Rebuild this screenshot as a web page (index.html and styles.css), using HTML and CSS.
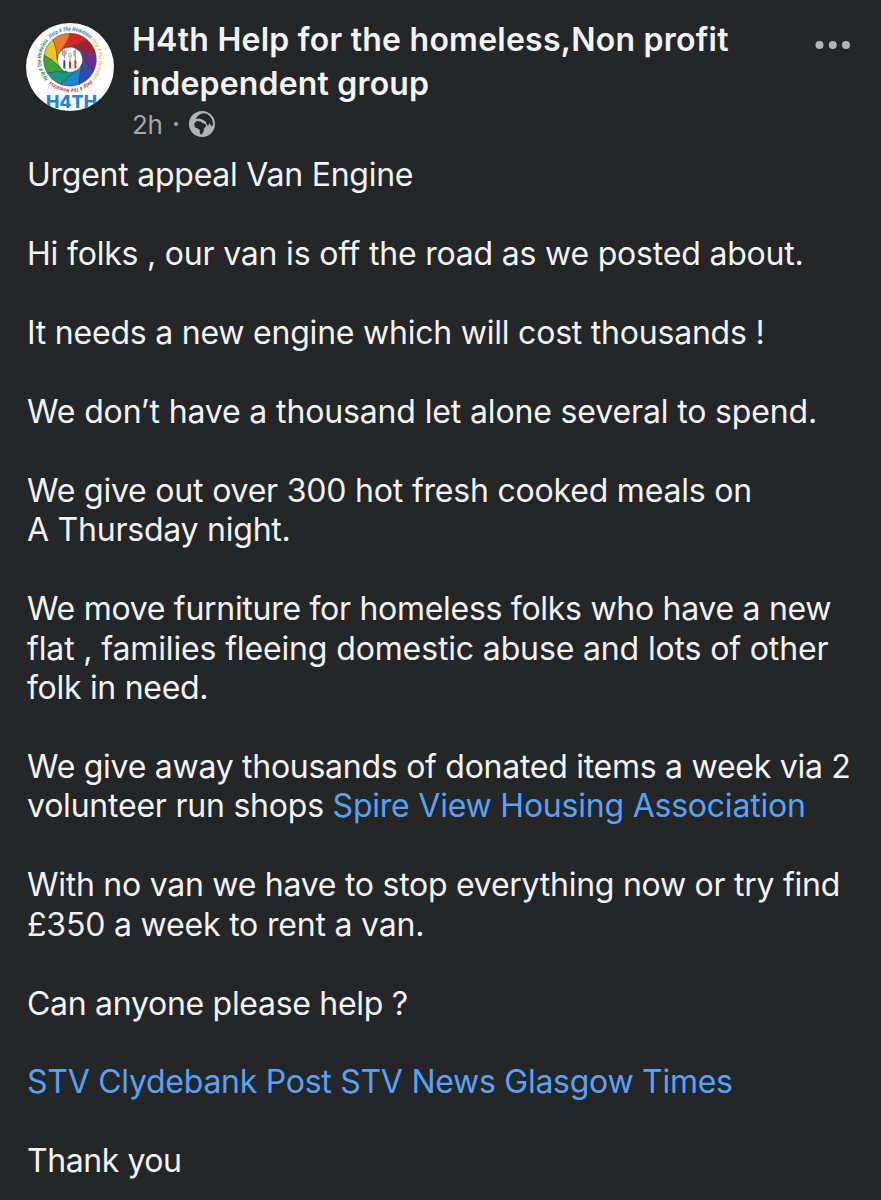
FILE: index.html
```html
<!DOCTYPE html>
<html lang="en">
<head>
<meta charset="utf-8">
<title>H4th Help for the homeless</title>
<link rel="stylesheet" href="styles.css">
</head>
<body>
<article class="post">
  <header class="head">
    <svg class="avatar" viewBox="18 20 264 264" aria-label="H4TH logo">
      <defs>
        <clipPath id="disc"><circle cx="150" cy="152" r="132"/></clipPath>
        <path id="blade" d="M0-79A79 79 0 0 1 50.8-60.5Q26-43.4-6.6-37.4A38 38 0 0 0-29.1-24.4Q-8-50 0-79Z"/>
        <path id="ring" d="M0 87A87 87 0 0 1 0-87A87 87 0 0 1 0 87A87 87 0 0 1 0-87"/>
      </defs>
      <circle cx="150" cy="152" r="132" fill="#fff"/>
      <g clip-path="url(#disc)">
        <g transform="translate(150 130)">
          <g stroke="#553c35" stroke-width="1.5">
            <use href="#blade" fill="#d3262c"/>
            <use href="#blade" fill="#9b2236" transform="rotate(40)"/>
            <use href="#blade" fill="#6b2c91" transform="rotate(80)"/>
            <use href="#blade" fill="#304bb0" transform="rotate(120)"/>
            <use href="#blade" fill="#1689d0" transform="rotate(160)"/>
            <use href="#blade" fill="#16978c" transform="rotate(200)"/>
            <use href="#blade" fill="#42a23a" transform="rotate(240)"/>
            <use href="#blade" fill="#edc51c" transform="rotate(280)"/>
            <use href="#blade" fill="#ef792b" transform="rotate(320)"/>
          </g>
          <g fill="none" stroke-width="4" stroke-linecap="round">
            <path stroke="#a8a8a8" d="M-17-28V-4M-22-27V-16Q-17-10-12-16V-27M16-29V0M12-27V-13"/>
            <path stroke="#b8b8b8" d="M0-6V8"/>
            <ellipse cx="0" cy="-13" rx="4" ry="6" stroke="#b8b8b8"/>
            <path stroke="#304b92" stroke-width="6" d="M-17 4V24"/>
            <path stroke="#c03a3a" stroke-width="6" d="M0 8V24M16 4V24"/>
          </g>
          <g class="motto">
            <text fill="#2a78ba" transform="rotate(-43)"><textPath href="#ring" startOffset="273.3" textLength="133" lengthAdjust="spacingAndGlyphs">Help 4 The Homeless</textPath></text>
            <text fill="#e4c34d" transform="rotate(47)"><textPath href="#ring" startOffset="273.3" textLength="128" lengthAdjust="spacingAndGlyphs">Help 4 The Homeless</textPath></text>
            <text fill="#c9343f" transform="rotate(134)"><textPath href="#ring" startOffset="273.3" textLength="133" lengthAdjust="spacingAndGlyphs">Help 4 The Homeless</textPath></text>
            <text fill="#24874c" transform="rotate(228)"><textPath href="#ring" startOffset="273.3" textLength="126" lengthAdjust="spacingAndGlyphs">Help 4 The Homeless</textPath></text>
          </g>
        </g>
        <text class="mark" x="78" y="275" textLength="153" lengthAdjust="spacingAndGlyphs">H4TH</text>
      </g>
    </svg>
    <div class="who">
      <h1 class="name"><span class="n1">H4th Help for the homeless,Non profit</span><br><span class="n2">independent group</span></h1>
      <div class="meta">
        <span>2h</span><i class="sep"></i>
        <svg class="globe" viewBox="0 0 26 26" aria-label="Public">
          <circle cx="13" cy="13" r="13" fill="#b0b3b8"/>
          <path fill="#252628" d="M6.5 8.2C8 5.3 10.5 2.7 14 2.2C19.5 2 24 7 24 13.5L22.8 15.8L20.5 12L19.3 14.7L17.6 13.7L17 10.8L13.2 8.6L9.8 7.5Z"/>
          <path fill="#252628" d="M5.3 12.4L7.8 10L11.8 10.4L13.2 12L16 12.7L17.3 15L15.2 17.2L14.6 20.6L12.6 23.6L11 23L10.5 18.6L8.7 17.4L5.8 16.3Z"/>
        </svg>
      </div>
    </div>
    <svg class="more" viewBox="0 0 36 8" aria-label="More"><circle cx="4.5" cy="4" r="4"/><circle cx="17.8" cy="4" r="4"/><circle cx="31" cy="4" r="4"/></svg>
  </header>
  <div class="body">
    <p><span class="l1">Urgent appeal Van Engine</span></p>
    <p><span class="l2">Hi folks , our van is off the road as we posted about.</span></p>
    <p><span class="l3">It needs a new engine which will cost thousands !</span></p>
    <p><span class="l4">We don’t have a thousand let alone several to spend.</span></p>
    <p><span class="l5">We give out over 300 hot fresh cooked meals on</span><br><span class="l6">A Thursday night.</span></p>
    <p><span class="l7">We move furniture for homeless folks who have a new</span><br><span class="l8">flat , families fleeing domestic abuse and lots of other</span><br><span class="l9">folk in need.</span></p>
    <p><span class="l10">We give away thousands of donated items a week via 2</span><br><span class="l11">volunteer run shops <a>Spire View Housing Association</a></span></p>
    <p><span class="l12">With no van we have to stop everything now or try find</span><br><span class="l13">£350 a week to rent a van.</span></p>
    <p><span class="l14">Can anyone please help ?</span></p>
    <p><span class="l15"><a>STV</a> <a>Clydebank Post</a> <a>STV News</a> <a>Glasgow Times</a></span></p>
    <p><span class="l16">Thank you</span></p>
  </div>
</article>
</body>
</html>
```
FILE: styles.css
```css
body {
  margin: 0;
  background: #252628;
  color: #f2f3f5;
  font-family: Inter, "Liberation Sans", sans-serif;
}
.post { height: 1200px; overflow: hidden; }
.head {
  display: flex;
  align-items: flex-start;
  height: 155.4px;
  box-sizing: border-box;
  padding: 18px 30px 0 26px;
}
.avatar { width: 88px; height: 88px; margin-top: 5px; flex: none; }
.motto { font: italic 700 16px "Open Sans", sans-serif; }
.mark { font: 800 51px Inter, sans-serif; fill: #2384d4; }
.who { flex: 1; margin-left: 18px; white-space: nowrap; }
.name { margin: 0; font-size: 32px; line-height: 43.5px; font-weight: 600; }
.meta {
  display: flex;
  align-items: center;
  height: 38px;
  font-size: 26px;
  letter-spacing: -0.4px;
  color: #a5a7ab;
}
.sep { width: 4px; height: 4px; border-radius: 50%; background: #a5a7ab; margin: 0 11px 0 12px; }
.globe { width: 26px; height: 26px; }
.more { width: 36px; height: 8px; margin-top: 23px; fill: #b0b3b8; }
.body { padding-left: 27px; font-size: 32px; line-height: 39.44px; white-space: nowrap; }
.body p { margin: 0 0 39.44px; }
.body a { color: #5aa2f7; }

/* Per-line tracking */
.n1 { letter-spacing: 0.24px; }
.n2 { letter-spacing: 0.18px; }
.l1 { letter-spacing: -0.25px; }
.l2 { letter-spacing: -0.2px; }
.l3 { letter-spacing: -0.22px; }
.l4 { letter-spacing: -0.14px; }
.l5 { letter-spacing: -0.2px; }
.l6 { letter-spacing: -0.23px; }
.l7 { letter-spacing: -0.29px; }
.l8 { letter-spacing: -0.14px; }
.l9 { letter-spacing: -0.3px; }
.l10 { letter-spacing: -0.27px; }
.l11 { letter-spacing: -0.22px; }
.l12 { letter-spacing: -0.26px; }
.l13 { letter-spacing: -0.19px; }
.l14 { letter-spacing: -0.29px; }
.l15 { letter-spacing: -0.27px; }
.l16 { letter-spacing: -0.44px; }
```
